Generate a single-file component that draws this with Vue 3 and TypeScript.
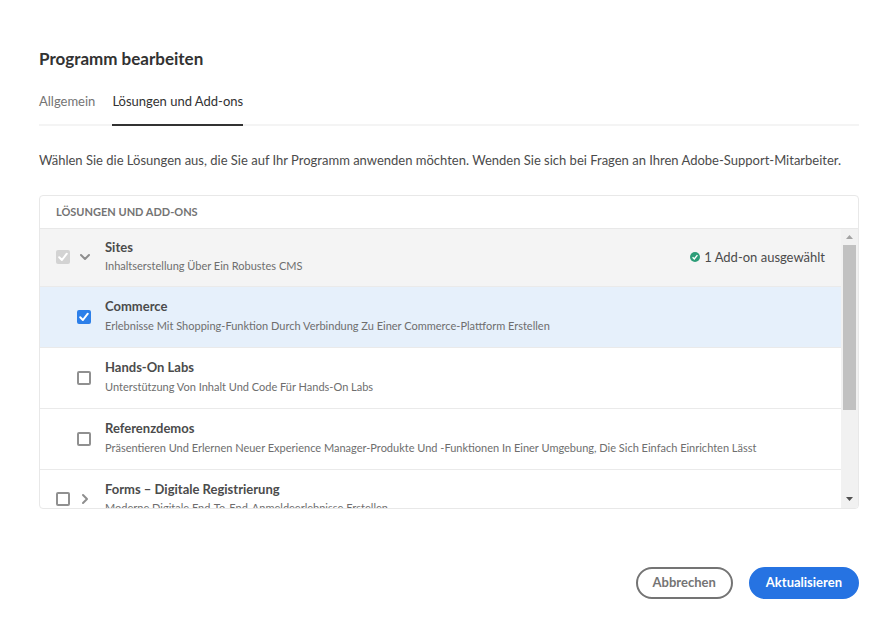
<script setup lang="ts">
import { reactive } from 'vue'

interface Solution {
  id: string
  name: string
  description: string
  checked: boolean
  level: 'root' | 'child'
  locked?: boolean
  expanded?: boolean
  status?: string
}

const solutions = reactive<Solution[]>([
  { id: 'sites', name: 'Sites', description: 'Inhaltserstellung Über Ein Robustes CMS', checked: true, level: 'root', locked: true, expanded: true, status: '1 Add-on ausgewählt' },
  { id: 'commerce', name: 'Commerce', description: 'Erlebnisse Mit Shopping-Funktion Durch Verbindung Zu Einer Commerce-Plattform Erstellen', checked: true, level: 'child' },
  { id: 'labs', name: 'Hands-On Labs', description: 'Unterstützung Von Inhalt Und Code Für Hands-On Labs', checked: false, level: 'child' },
  { id: 'demos', name: 'Referenzdemos', description: 'Präsentieren Und Erlernen Neuer Experience Manager-Produkte Und -Funktionen In Einer Umgebung, Die Sich Einfach Einrichten Lässt', checked: false, level: 'child' },
  { id: 'forms', name: 'Forms – Digitale Registrierung', description: 'Moderne Digitale End-To-End-Anmeldeerlebnisse Erstellen', checked: false, level: 'root', expanded: false },
])
</script>

<template>
  <main class="dialog">
    <h1 class="title">Programm bearbeiten</h1>

    <nav class="tabs">
      <a class="tab" href="#general">Allgemein</a>
      <a class="tab active" href="#solutions" aria-current="page">Lösungen und Add-ons</a>
    </nav>

    <p class="intro">Wählen Sie die Lösungen aus, die Sie auf Ihr Programm anwenden möchten. Wenden Sie sich bei Fragen an Ihren Adobe-Support-Mitarbeiter.</p>

    <section class="panel">
      <h2 class="panel-head">Lösungen und Add-ons</h2>
      <div class="viewport">
        <ul class="rows">
          <li
            v-for="item in solutions"
            :key="item.id"
            class="row"
            :class="[item.level, { open: item.expanded, selected: item.level === 'child' && item.checked }]"
          >
            <span class="check">
              <input :id="item.id" v-model="item.checked" type="checkbox" :disabled="item.locked" />
              <svg v-if="item.checked" class="tick" viewBox="0 0 14 14" aria-hidden="true">
                <path d="M3.2 7.300 5.900 10 10.800 3.700" />
              </svg>
            </span>
            <button v-if="item.level === 'root'" class="toggle" type="button" :aria-expanded="item.expanded" :aria-label="item.name">
              <svg viewBox="0 0 12 12" aria-hidden="true">
                <path v-if="item.expanded" d="M2 4 6 8 10 4" />
                <path v-else d="M4 2 8 6 4 10" />
              </svg>
            </button>
            <label class="text" :for="item.id">
              <span class="name">{{ item.name }}</span>
              <span class="description">{{ item.description }}</span>
            </label>
            <span v-if="item.status" class="status">
              <svg viewBox="0 0 10 10" aria-hidden="true">
                <circle cx="5" cy="5" r="5" />
                <path d="M2.6 5.3 4.3 7 7.4 3.1" />
              </svg>
              {{ item.status }}
            </span>
          </li>
        </ul>
        <div class="scrollbar" aria-hidden="true">
          <svg class="arrow up" viewBox="0 0 17 16"><path d="M5 10h7L8.500 6z" /></svg>
          <div class="thumb"></div>
          <svg class="arrow down" viewBox="0 0 17 16"><path d="M5 5h7L8.500 9z" /></svg>
        </div>
      </div>
    </section>

    <footer class="actions">
      <button class="button secondary" type="button">Abbrechen</button>
      <button class="button primary" type="button">Aktualisieren</button>
    </footer>
  </main>
</template>

<style>
body {
  background: #fff;
}
</style>

<style scoped>
* {
  box-sizing: border-box;
}

.dialog {
  padding: 46px 35px 35px 39px;
  font-family: Lato, "Noto Sans", sans-serif;
  font-size: 13px;
  line-height: 20px;
  color: #4b4b4b;
}

.title {
  margin: 0;
  font-size: 17px;
  line-height: 26px;
  font-weight: 700;
  color: #323232;
}

.tabs {
  display: flex;
  gap: 17px;
  height: 35px;
  margin-top: 19px;
  border-bottom: 2px solid #f4f4f4;
}

.tab {
  height: 35px;
  line-height: 20px;
  color: #747474;
  text-decoration: none;
  white-space: nowrap;
}

.tab.active {
  color: #323232;
  border-bottom: 2px solid #323232;
}

.intro {
  margin: 24px 0 25px;
  white-space: nowrap;
}

.panel {
  overflow: hidden;
  border: 1px solid #e8e8e8;
  border-radius: 4px;
}

.panel-head {
  margin: 0;
  padding: 0 16px;
  font-size: 11px;
  line-height: 32px;
  font-weight: 700;
  text-transform: uppercase;
  color: #747474;
  border-bottom: 1px solid #e8e8e8;
}

.viewport {
  display: flex;
  height: 279px;
}

.rows {
  flex: 1;
  min-width: 0;
  height: 100%;
  margin: 0;
  padding: 0;
  overflow: hidden;
  list-style: none;
}

.row {
  display: flex;
  align-items: center;
  height: 61px;
  padding: 0 16px 2px;
  border-bottom: 1px solid #eaeaea;
}

.row.open {
  height: 58px;
  background: #f4f4f4;
}

.row.child {
  padding: 0 16px 0 37px;
}

.row.selected {
  background: #e6f0fb;
}

.check {
  position: relative;
  flex: none;
  width: 14px;
  height: 14px;
}

.check input {
  appearance: none;
  display: block;
  width: 14px;
  height: 14px;
  margin: 0;
  border: 2px solid #909090;
  border-radius: 2px;
  background: #fff;
}

.check input:checked {
  border-color: #2c7fe9;
  background: #2c7fe9;
}

.check input:disabled {
  border-color: #d3d3d3;
  background: #d3d3d3;
}

.tick {
  position: absolute;
  inset: 0;
  fill: none;
  stroke: #fff;
  stroke-width: 2;
  stroke-linecap: round;
  stroke-linejoin: round;
  pointer-events: none;
}

.toggle {
  flex: none;
  width: 12px;
  height: 12px;
  margin-left: 9px;
  padding: 0;
  border: 0;
  background: none;
}

.toggle svg {
  display: block;
  fill: none;
  stroke: #8e8e8e;
  stroke-width: 2;
  stroke-linecap: round;
  stroke-linejoin: round;
}

.text {
  display: flex;
  flex: 1;
  flex-direction: column;
  min-width: 0;
  margin-left: 14px;
  padding-bottom: 2px;
  white-space: nowrap;
}

.name {
  font-weight: 700;
}

.child .name {
  line-height: 19px;
}

.child .description {
  line-height: 20px;
}

.description {
  font-size: 11px;
  line-height: 18px;
  color: #6e6e6e;
}

.status {
  display: flex;
  align-items: center;
  gap: 4px;
  white-space: nowrap;
}

.status svg {
  width: 10px;
  height: 10px;
}

.status circle {
  fill: #2d9d78;
}

.status path {
  fill: none;
  stroke: #fff;
  stroke-width: 1.4;
}

.scrollbar {
  display: flex;
  flex: none;
  flex-direction: column;
  width: 17px;
  background: #f1f1f1;
}

.arrow {
  display: block;
  width: 17px;
  height: 16px;
}

.up {
  fill: #a3a3a3;
}

.down {
  margin-top: auto;
  fill: #505050;
}

.thumb {
  height: 165px;
  margin: 0 2px;
  background: #c1c1c1;
}

.actions {
  display: flex;
  justify-content: flex-end;
  gap: 16px;
  margin-top: 58px;
}

.button {
  height: 32px;
  padding: 0 15px 2px;
  border: 2px solid #747474;
  border-radius: 16px;
  font: inherit;
  font-weight: 700;
  line-height: 20px;
}

.secondary {
  color: #747474;
  background: #fff;
}

.primary {
  color: #fff;
  border-color: #2673e2;
  background: #2673e2;
}
</style>
